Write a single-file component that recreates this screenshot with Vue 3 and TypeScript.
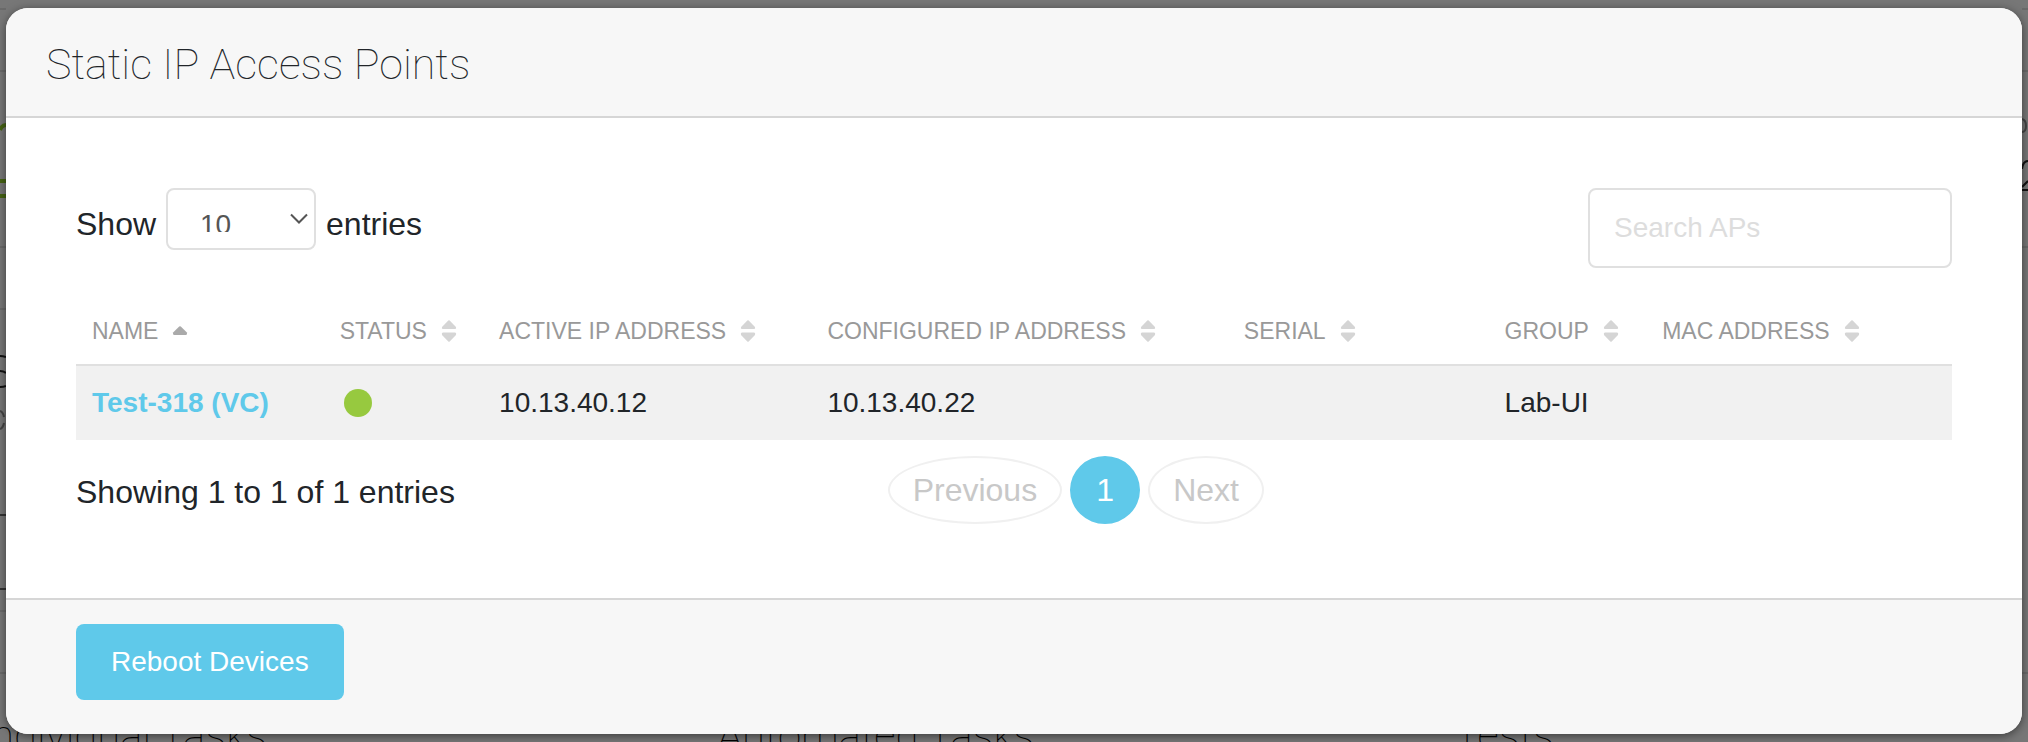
<script setup lang="ts">
import { ref } from 'vue'

interface Column {
  key: string
  label: string
  sorted?: boolean
}

const columns: Column[] = [
  { key: 'name', label: 'NAME', sorted: true },
  { key: 'status', label: 'STATUS' },
  { key: 'active', label: 'ACTIVE IP ADDRESS' },
  { key: 'configured', label: 'CONFIGURED IP ADDRESS' },
  { key: 'serial', label: 'SERIAL' },
  { key: 'group', label: 'GROUP' },
  { key: 'mac', label: 'MAC ADDRESS' },
]

const rows = [
  { name: 'Test-318 (VC)', active: '10.13.40.12', configured: '10.13.40.22', serial: '', group: 'Lab-UI', mac: '' },
]

const pageSize = ref('10')
const query = ref('')
</script>

<template>
  <div class="screen">
    <div class="page" aria-hidden="true">
      <div class="edges">
        <svg class="edge" width="6" height="742" viewBox="0 0 6 742">
          <path d="M0 9h6M0 71h6M0 247h6M0 309h6" stroke="#6a6a6a" stroke-width="2" />
          <path d="M0 130q2 -5 6 -5" fill="none" stroke="#466414" stroke-width="4" />
          <path d="M0 181h6M0 196h6" stroke="#466414" stroke-width="4" />
          <path d="M0 356q3 0 6 1M0 371q4 0 6 2M0 387q4 0 6 -1" fill="none" stroke="#111" stroke-width="2" />
          <path d="M0 411q3 1 4 6M4 423q-1 5 -4 6" fill="none" stroke="#444" stroke-width="2" />
          <path d="M0 515h6M0 589h6" stroke="#333" stroke-width="2" />
          <path d="M0 611h6M0 673h6" stroke="#6a6a6a" stroke-width="2" />
        </svg>
        <svg class="edge" width="6" height="742" viewBox="0 0 6 742">
          <path d="M0 9h6M0 71h6M0 247h6M0 673h6" stroke="#6a6a6a" stroke-width="2" />
          <path d="M0 119q4 1 4 7t-4 6" fill="none" stroke="#444" stroke-width="2" />
          <path d="M0 169q1 -8 6 -8M0 187l6 -6M0 190h6" fill="none" stroke="#111" stroke-width="2" />
        </svg>
      </div>
      <div class="tasks">
        <div class="task">Individual Tasks</div>
        <div class="task">Automated Tasks</div>
        <div class="task">Tests</div>
      </div>
    </div>

    <div class="backdrop">
      <section class="modal" role="dialog" aria-labelledby="modal-title">
        <header class="modal-header">
          <h1 id="modal-title">Static IP Access Points</h1>
        </header>

        <div class="modal-body">
          <div class="controls">
            <div class="length">
              <label for="page-size">Show</label>
              <span class="select-box">
                <select id="page-size" v-model="pageSize">
                  <option>10</option>
                  <option>25</option>
                  <option>50</option>
                </select>
                <svg class="chevron" width="18" height="12" viewBox="0 0 18 12">
                  <path d="M1 1.500L9 9.500L17 1.500" fill="none" stroke="#555" stroke-width="2" />
                </svg>
              </span>
              <span>entries</span>
            </div>
            <input v-model="query" class="search" type="search" placeholder="Search APs" aria-label="Search APs" />
          </div>

          <table>
            <thead>
              <tr>
                <th v-for="c in columns" :key="c.key" :class="'col-' + c.key" scope="col">
                  <button type="button" class="sort">
                    {{ c.label }}
                    <svg v-if="c.sorted" width="16" height="22" viewBox="0 0 16 22">
                      <path d="M7.200 6.600Q8 5.900 8.800 6.600L14.900 12.600Q15.600 14.800 14 15H2Q0.400 14.800 1.100 12.600Z" fill="#aaa" />
                    </svg>
                    <svg v-else width="16" height="22" viewBox="0 0 16 22">
                      <path d="M7.300 0.600Q8 0 8.700 0.600L15 7Q15.600 8.800 14.200 9H1.800Q0.400 8.800 1 7Z" fill="#d5d5d5" />
                      <path d="M7.300 21.400Q8 22 8.700 21.400L15 15Q15.600 12.700 14.200 12.500H1.800Q0.400 12.700 1 15Z" fill="#d5d5d5" />
                    </svg>
                  </button>
                </th>
              </tr>
            </thead>
            <tbody>
              <tr v-for="r in rows" :key="r.name">
                <td><a href="#">{{ r.name }}</a></td>
                <td><span class="dot" role="img" aria-label="Up"></span></td>
                <td>{{ r.active }}</td>
                <td>{{ r.configured }}</td>
                <td>{{ r.serial }}</td>
                <td>{{ r.group }}</td>
                <td>{{ r.mac }}</td>
              </tr>
            </tbody>
          </table>

          <div class="summary">
            <div class="info">Showing 1 to 1 of 1 entries</div>
            <nav class="pager" aria-label="Pagination">
              <button type="button" class="pill">Previous</button>
              <button type="button" class="pill current" aria-current="page">1</button>
              <button type="button" class="pill">Next</button>
            </nav>
          </div>
        </div>

        <footer class="modal-footer">
          <button type="button" class="reboot">Reboot Devices</button>
        </footer>
      </section>
    </div>
  </div>
</template>

<style>
body {
  background: #777;
}
</style>

<style scoped>
* {
  box-sizing: border-box;
}

.screen {
  position: relative;
  height: 100vh;
  overflow: hidden;
  font-family: "Liberation Sans", Arial, sans-serif;
  font-size: 32px;
  color: #212529;
}

.page {
  position: absolute;
  inset: 0;
  overflow: hidden;
}

.edges {
  display: flex;
  justify-content: space-between;
  height: 100%;
}

.edge {
  display: block;
}

.tasks {
  position: absolute;
  left: -20px;
  right: 0;
  top: 711px;
  display: grid;
  grid-template-columns: 36fr 36fr 28fr;
  font-family: Roboto, sans-serif;
  font-size: 42px;
  font-weight: 100;
  line-height: 50px;
  color: #000;
}

.backdrop {
  position: absolute;
  inset: 0;
  padding: 8px 6px;
}

.modal {
  border-radius: 22px;
  background: #fff;
  box-shadow: 0 2px 10px rgba(0, 0, 0, 0.5);
  overflow: hidden;
}

.modal-header {
  padding: 27px 40px 23px;
  background: #f7f7f7;
  border-bottom: 2px solid #d6d6d6;
}

h1 {
  margin: 0;
  font-family: Roboto, sans-serif;
  font-size: 43px;
  font-weight: 100;
  line-height: 58px;
}

.modal-body {
  padding: 70px 70px 72px;
}

.controls {
  display: flex;
  justify-content: space-between;
  align-items: flex-start;
}

.length {
  display: flex;
  align-items: center;
  gap: 10px;
  line-height: 72px;
}

.select-box {
  display: grid;
  align-self: flex-start;
}

select {
  grid-area: 1 / 1;
  appearance: none;
  width: 150px;
  height: 62px;
  margin: 0;
  padding: 19px 32px 16px;
  border: 2px solid #e0e0e0;
  border-radius: 8px;
  background: #fff;
  font: inherit;
  font-size: 28px;
  line-height: 32px;
  color: #555;
}

.chevron {
  grid-area: 1 / 1;
  align-self: center;
  justify-self: end;
  margin-right: 8px;
  pointer-events: none;
}

.search {
  appearance: none;
  width: 364px;
  height: 80px;
  margin: 0;
  padding: 0 24px;
  border: 2px solid #e0e0e0;
  border-radius: 8px;
  background: #fff;
  font: inherit;
  font-size: 28px;
  color: #555;
}

.search::placeholder {
  color: #ddd;
  opacity: 1;
}

table {
  width: 100%;
  margin-top: 30px;
  table-layout: fixed;
  border-collapse: separate;
  border-spacing: 0;
  text-align: left;
}

th {
  height: 68px;
  padding: 0 16px;
  border-bottom: 2px solid #e0e0e0;
  font-weight: 400;
}

.col-name { width: 13.2%; }
.col-status { width: 8.5%; }
.col-active { width: 17.5%; }
.col-configured { width: 22.2%; }
.col-serial { width: 13.9%; }
.col-group { width: 8.4%; }
.col-mac { width: 16.3%; }

.sort {
  display: flex;
  align-items: center;
  gap: 14px;
  padding: 0;
  border: 0;
  background: none;
  font: inherit;
  font-size: 23px;
  line-height: 28px;
  white-space: nowrap;
  color: #999;
}

td {
  height: 74px;
  padding: 0 16px;
  background: #f1f1f1;
  font-size: 28px;
}

a {
  color: #5fc9ea;
  font-weight: 700;
  text-decoration: none;
}

.dot {
  display: block;
  width: 28px;
  height: 28px;
  margin-left: 4px;
  border-radius: 50%;
  background: #97c93f;
}

.summary {
  display: grid;
  grid-template-columns: 5fr 7fr;
  padding-top: 16px;
}

.info {
  padding-top: 2px;
  line-height: 68px;
}

.pager {
  display: flex;
  gap: 8px;
  padding-left: 30px;
}

.pill {
  min-width: 70px;
  height: 68px;
  padding: 0 23px;
  border: 2px solid #f0f0f0;
  border-radius: 50%;
  background: #fff;
  font: inherit;
  color: #c8c8c8;
}

.current {
  border-color: #5fc9ea;
  background: #5fc9ea;
  color: #fff;
}

.modal-footer {
  padding: 24px 70px 34px;
  background: #f7f7f7;
  border-top: 2px solid #d6d6d6;
}

.reboot {
  display: block;
  height: 76px;
  padding: 0 35px;
  border: 0;
  border-radius: 8px;
  background: #5fc9ea;
  font: inherit;
  font-size: 28px;
  color: #fff;
}
</style>
